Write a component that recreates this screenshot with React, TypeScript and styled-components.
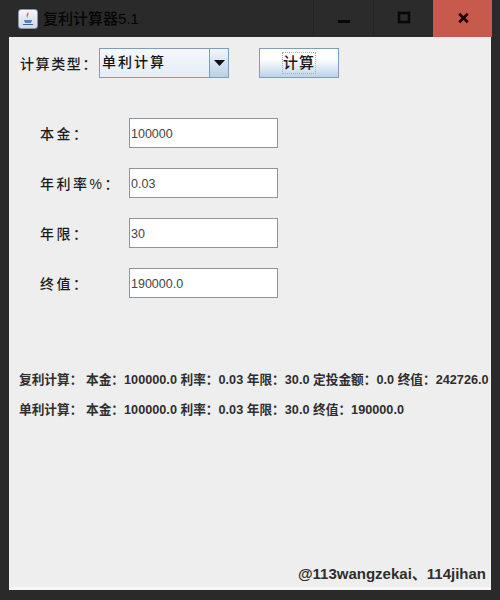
import React from "react";
import styled, { createGlobalStyle } from "styled-components";

const Global = createGlobalStyle`
  html, body { margin: 0; padding: 0; background: #2a2a2a; }
  #root { width: 500px; height: 600px; overflow: hidden; }
  * { box-sizing: border-box; }
`;

const cjk = `"Liberation Sans", "Noto Sans CJK SC", sans-serif`;

const Frame = styled.div`
  width: 500px; height: 600px; background: #2a2a2a;
  display: flex; flex-direction: column;
  padding: 0 9px 10px 9px;
  font-family: ${cjk};
`;
const TitleBar = styled.div`
  height: 37px; flex: none; display: flex; align-items: flex-start;
  margin-left: -9px; margin-right: -1px;
`;
const AppIcon = styled.div`
  width: 20px; height: 20px; margin: 9px 5px 0 18px; border-radius: 3px;
  background: linear-gradient(#f4f6fa, #cfd8e6); border: 1px solid #8b97a8;
  display: flex; align-items: center; justify-content: center;
`;
const Title = styled.div`
  flex: 1; margin-top: 10px; font-size: 15px; line-height: 18px; color: #050505;
  font-weight: 500;
`;
const WinBtn = styled.div<{ $close?: boolean; $w: number }>`
  width: ${p => p.$w}px; height: ${p => (p.$close ? 37 : 35)}px;
  background: ${p => (p.$close ? "#c75a4c" : "#2b2b2b")};
  border-left: 1px solid ${p => (p.$close ? "#c75a4c" : "#242424")};
  display: flex; align-items: center; justify-content: center;
  padding-bottom: ${p => (p.$close ? 2 : 0)}px;
`;
const Client = styled.div`
  flex: 1; background: #eeeeee; display: flex; flex-direction: column;
  border-bottom: 3px solid #f7f7f7; width: 482px;
`;
const TopRow = styled.div`
  display: flex; align-items: center; height: 30px; margin-top: 11px; padding-left: 11px;
`;
const TopLabel = styled.div`
  width: 79px; font-size: 14px; font-weight: 500; color: #1b1b1b; letter-spacing: 1.6px; white-space: nowrap;
`;
const Combo = styled.div`
  width: 130px; height: 30px; display: flex; border: 1px solid #7f9db9;
  background: linear-gradient(#f4f7fb, #e6edf5);
`;
const ComboText = styled.div`
  flex: 1; padding-left: 2px; font-size: 14px; font-weight: 500; line-height: 26px; color: #111; letter-spacing: 2px;
`;
const ComboArrow = styled.div`
  width: 19px; border-left: 1px solid #7f9db9;
  background: linear-gradient(#f2f6fb, #b9d0e6);
  display: flex; align-items: center; justify-content: center;
`;
const Calc = styled.div`
  width: 80px; height: 30px; margin-left: 30px; border: 1px solid #7f9db9;
  background: linear-gradient(#ffffff 35%, #bcd4e8);
  display: flex; align-items: center; justify-content: center;
`;
const CalcText = styled.span`
  font-size: 15px; font-weight: 500; line-height: 20px; color: #1a1a1a; letter-spacing: 1px;
  outline: 1px dotted #9fb3c6;
`;
const Fields = styled.div`
  display: flex; flex-direction: column; gap: 20px; margin-top: 40px; padding-left: 31px;
`;
const FieldRow = styled.div`
  display: flex; align-items: center; height: 30px;
`;
const FieldLabel = styled.div`
  width: 89px; font-size: 14px; font-weight: 500; color: #1b1b1b; letter-spacing: 2.5px; white-space: nowrap;
`;
const Input = styled.div`
  width: 149px; height: 30px; background: #fff; border: 1px solid #8c949c;
  padding-left: 1px; font-size: 12.5px; line-height: 30px; color: #444;
  font-family: "Liberation Sans", sans-serif;
`;
const Results = styled.div`
  display: flex; flex-direction: column; gap: 12px; margin-top: 73px; padding-left: 10px;
`;
const ResultLine = styled.div`
  font-size: 12.7px; font-weight: 700; line-height: 18px; color: #2e2e2e; white-space: nowrap;
`;
const Credit = styled.div`
  margin-top: auto; margin-bottom: 3px; padding-right: 5px; text-align: right;
  font-size: 15px; font-weight: 700; line-height: 20px; color: #2e2e2e;
`;

const fields = [
  ["本金：", "100000"],
  ["年利率%：", "0.03"],
  ["年限：", "30"],
  ["终值：", "190000.0"],
];

export default function App() {
  return (
    <Frame>
      <Global />
      <TitleBar>
        <AppIcon>
          <svg width="14" height="16" viewBox="0 0 14 16">
            <path d="M7 1 C9 4 5 5 7 8 C5 6 5 4 7 1Z" fill="#d9663a" />
            <path d="M3 9 h8 l-1 3 h-6z" fill="#5a7fb0" />
            <path d="M2 13 h10 v1 h-10z" fill="#3c6496" />
          </svg>
        </AppIcon>
        <Title>复利计算器5.1</Title>
        <WinBtn $w={60}>
          <svg width="14" height="14" viewBox="0 0 14 14"><rect x="1" y="9" width="12" height="3" fill="#080808" /></svg>
        </WinBtn>
        <WinBtn $w={60}>
          <svg width="14" height="14" viewBox="0 0 14 14"><rect x="2" y="2" width="10" height="9" fill="none" stroke="#080808" strokeWidth="2.6" /></svg>
        </WinBtn>
        <WinBtn $w={59} $close>
          <svg width="13" height="12" viewBox="0 0 14 14"><path d="M2 2 L12 12 M12 2 L2 12" stroke="#1e0705" strokeWidth="3.2" /></svg>
        </WinBtn>
      </TitleBar>
      <Client>
        <TopRow>
          <TopLabel>计算类型：</TopLabel>
          <Combo>
            <ComboText>单利计算</ComboText>
            <ComboArrow>
              <svg width="11" height="6" viewBox="0 0 11 6"><path d="M0 0 H11 L5.5 6Z" fill="#111" /></svg>
            </ComboArrow>
          </Combo>
          <Calc><CalcText>计算</CalcText></Calc>
        </TopRow>
        <Fields>
          {fields.map(([l, v]) => (
            <FieldRow key={l}>
              <FieldLabel>{l}</FieldLabel>
              <Input>{v}</Input>
            </FieldRow>
          ))}
        </Fields>
        <Results>
          <ResultLine>复利计算： 本金：100000.0 利率：0.03 年限：30.0 定投金额：0.0 终值：242726.0</ResultLine>
          <ResultLine>单利计算： 本金：100000.0 利率：0.03 年限：30.0 终值：190000.0</ResultLine>
        </Results>
        <Credit>@113wangzekai、114jihan</Credit>
      </Client>
    </Frame>
  );
}
